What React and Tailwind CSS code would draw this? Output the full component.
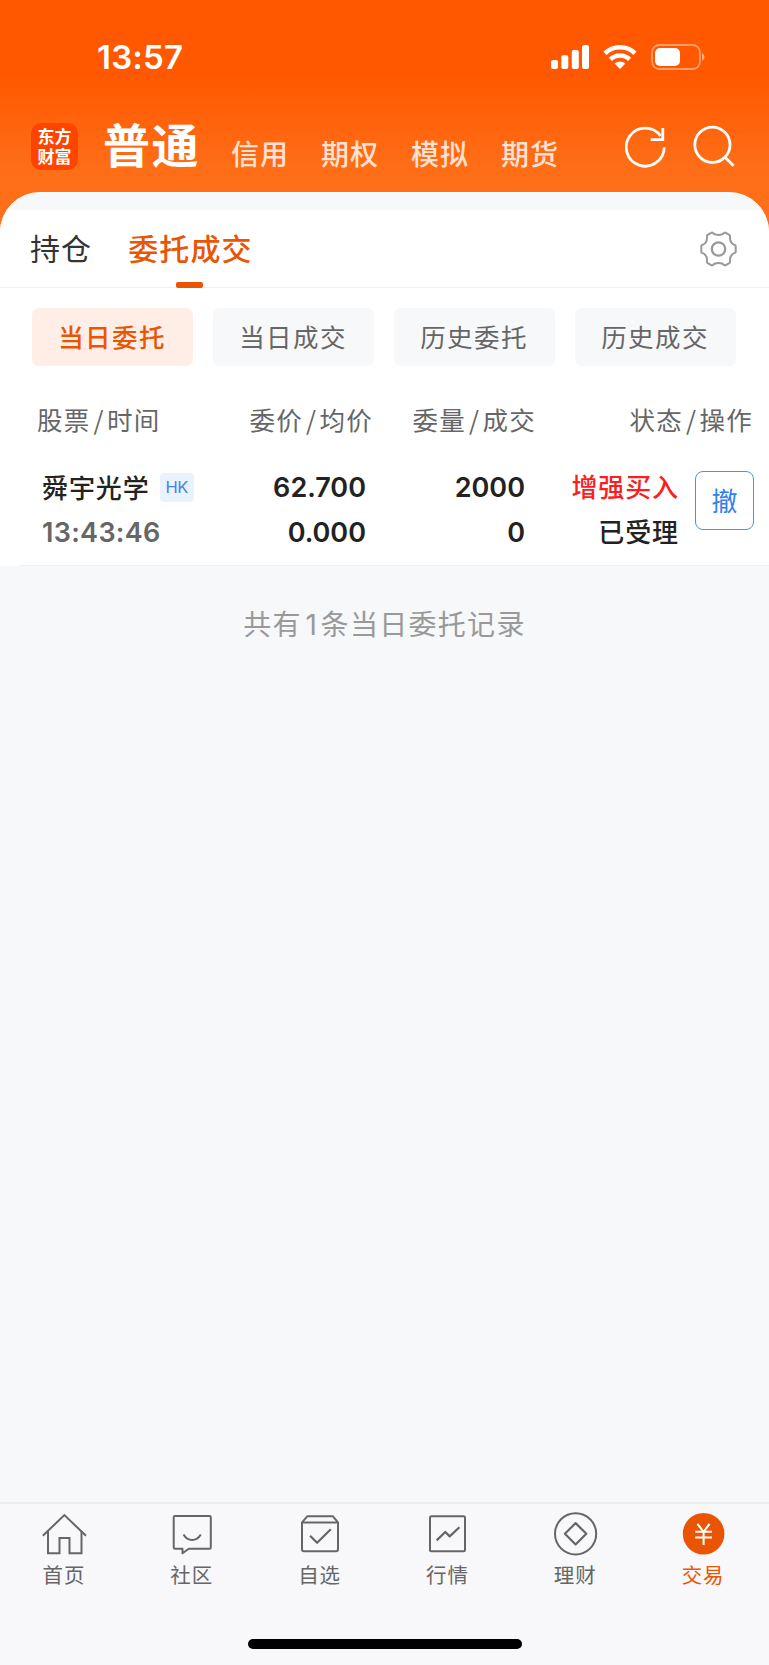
const markets = ["信用", "期权", "模拟", "期货"];
const filters = ["当日委托", "当日成交", "历史委托", "历史成交"];

function StatusBar() {
  return (
    <div className="flex h-[114px] items-center justify-between pl-[97px] pr-[64px]">
      <span className="font-['Inter',sans-serif] text-[33px] leading-none font-semibold tracking-[0.2px]">13:57</span>
      <div className="flex items-center">
        <svg className="h-6 w-[38px]" viewBox="0 0 38 24" fill="currentColor">
          <rect x="0" y="15" width="7" height="9" rx="2" />
          <rect x="10.3" y="10.3" width="7" height="13.7" rx="2" />
          <rect x="20.8" y="5" width="7" height="19" rx="2" />
          <rect x="31" y="0" width="7" height="24" rx="2" />
        </svg>
        <svg className="ml-[14px] h-6 w-[34px]" viewBox="0 0 34 24" fill="none" stroke="currentColor" strokeWidth="4.6">
          <path d="M2 8.3a21.6 21.6 0 0 1 30 0" />
          <path d="M7.4 14.4a13.8 13.8 0 0 1 19.2 0" />
          <path d="M11.6 18.6a8 8 0 0 1 10.8 0L17 24z" fill="currentColor" stroke="none" />
        </svg>
        <svg className="ml-[14px] h-[26px] w-[54px]" viewBox="0 0 54 26" fill="none">
          <rect x="1" y="1" width="48" height="24" rx="7.5" stroke="#fff" strokeOpacity="0.42" strokeWidth="1.8" />
          <rect x="4" y="4" width="25" height="18" rx="5" fill="#fff" />
          <path d="M51 9.3c3.2 1.2 3.2 6.2 0 7.4z" fill="#fff" fillOpacity="0.5" />
        </svg>
      </div>
    </div>
  );
}

function Header() {
  return (
    <div className="flex h-[78px] items-start pl-[31px] pr-[34px]">
      <div className="mt-[9px] flex h-[47px] w-[47px] flex-col items-center justify-center rounded-[10px] bg-[#ff4400] pb-[2px] text-[17px] leading-[19.6px] font-bold">
        <span>东方</span>
        <span>财富</span>
      </div>
      <h1 className="mt-[-1px] ml-[25px] text-[47px] leading-[60px] font-bold tracking-[1.5px]">普通</h1>
      <div className="mt-[17px] ml-[31px] flex gap-[32px] text-[28px] leading-[44px] font-medium tracking-[1px] text-[#ffe2d2]">
        {markets.map((item) => (
          <span key={item}>{item}</span>
        ))}
      </div>
      <div className="mt-[10px] ml-auto flex gap-[26px]">
        <svg className="h-[46px] w-[42px]" viewBox="0 0 42 46" fill="none" stroke="currentColor" strokeWidth="2.8">
          <path d="M39.2 23.5A19 19 0 1 1 35.6 12" />
          <path d="M37.8 4v11.7H25.7" />
        </svg>
        <svg className="h-[46px] w-[42px]" viewBox="0 0 42 46" fill="none" stroke="currentColor" strokeWidth="2.8">
          <circle cx="19.4" cy="20.7" r="17.6" />
          <path d="M31.8 33.1l8.8 8.6" />
        </svg>
      </div>
    </div>
  );
}

function GearIcon() {
  return (
    <svg className="h-[36px] w-[37px]" viewBox="0 0 37 36" fill="none" stroke="#999" strokeWidth="2" strokeLinejoin="round">
      <path d="M12.8 1.8C15 4.6 22 4.6 24.2 1.8Q25 1.4 25.8 1.9L29.3 3.9Q30.3 4.5 30.1 5.6C29.6 10.5 31.5 13 35 14.1Q35.7 14.5 35.7 15.3V20.7Q35.7 21.5 35 21.9C31.5 23 29.6 25.5 30.1 30.4Q30.3 31.5 29.3 32.1L25.8 34.1Q25 34.6 24.2 34.2C22 31.4 15 31.4 12.8 34.2Q12 34.6 11.2 34.1L7.7 32.1Q6.7 31.5 6.9 30.4C7.4 25.5 5.5 23 2 21.9Q1.3 21.5 1.3 20.7V15.3Q1.3 14.5 2 14.1C5.5 13 7.4 10.5 6.9 5.6Q6.7 4.5 7.7 3.9L11.2 1.9Q12 1.4 12.8 1.8Z" />
      <circle cx="18.5" cy="18" r="6.7" strokeWidth="2.3" />
    </svg>
  );
}

function Tabs() {
  return (
    <div className="flex h-[78px] shrink-0 items-start border-b border-[#eeeff1] bg-white pl-[30px] pr-[32px] text-[30px] leading-[44px] tracking-[1.1px]">
      <span className="mt-[15px] text-[#333]">持仓</span>
      <div className="ml-[36px] flex h-[78px] flex-col items-center justify-between pt-[15px] font-medium text-[#ea5504]">
        <span>委托成交</span>
        <span className="mr-[1px] h-[6px] w-[27px] rounded-[2px] bg-[#ea5504]" />
      </div>
      <div className="mt-[21px] ml-auto">
        <GearIcon />
      </div>
    </div>
  );
}

function Pair({ a, b }) {
  return (
    <span className="whitespace-nowrap">
      {a}
      <span className="mr-[2px] ml-[3px]">/</span>
      {b}
    </span>
  );
}

function Orders() {
  return (
    <div className="bg-white">
      <div className="grid grid-cols-4 gap-[20px] pt-[20px] pr-[33px] pl-[32px]">
        {filters.map((item, i) => (
          <button
            key={item}
            className={
              i === 0
                ? "h-[58px] rounded-[7px] bg-[#feeee6] pr-[1px] pb-[2px] text-[25.5px] font-medium tracking-[1.4px] text-[#ea5504]"
                : "h-[58px] rounded-[7px] bg-[#f7f8fa] pr-[1px] pb-[2px] text-[25.5px] tracking-[1.4px] text-[#666]"
            }
          >
            {item}
          </button>
        ))}
      </div>

      <div className="mt-[33px] flex h-[40px] pl-[37px] pr-[16px] text-[25.5px] leading-[40px] tracking-[1.3px] text-[#666]">
        <div className="w-[136px]"><Pair a="股票" b="时间" /></div>
        <div className="w-[200px] text-right"><Pair a="委价" b="均价" /></div>
        <div className="w-[163px] text-right"><Pair a="委量" b="成交" /></div>
        <div className="flex-1 text-right"><Pair a="状态" b="操作" /></div>
      </div>

      <div className="flex h-[126px] pt-[26px] pl-[42px] pr-[15px] text-[26px] leading-[45px] font-medium tracking-[0.9px] text-[#222]">
        <div className="w-[170px]">
          <div className="flex h-[45px] items-center">
            <span className="-mt-[3px]">舜宇光学</span>
            <span className="ml-[10px] flex h-[29px] w-[34px] items-center justify-center rounded-[4px] bg-[#eaf2fd] font-['Inter',sans-serif] text-[16.5px] leading-none font-normal tracking-[-0.5px] text-[#3c87e8]">HK</span>
          </div>
          <div className="font-['Inter',sans-serif] text-[27px] font-semibold tracking-[0.3px] text-[#666]">13:43:46</div>
        </div>
        <div className="w-[154px] text-right font-['Inter',sans-serif] text-[27px] font-semibold tracking-[0px]">
          <div>62.700</div>
          <div>0.000</div>
        </div>
        <div className="w-[159px] text-right font-['Inter',sans-serif] text-[27px] font-semibold tracking-[0px]">
          <div>2000</div>
          <div>0</div>
        </div>
        <div className="-mt-[2px] w-[154px] text-right">
          <div className="text-[#fb1d20]">增强买入</div>
          <div>已受理</div>
        </div>
        <button className="mt-[6px] ml-auto h-[59px] w-[59px] rounded-[8px] border-[1.5px] border-[#4a90ee] pb-[2px] text-[26px] leading-none font-normal tracking-normal text-[#2f80ed]">
          撤
        </button>
      </div>
      <div className="ml-[19px] h-px bg-[#eeeff0]" />
    </div>
  );
}

const iconClass = "h-[46px] w-[46px]";

const navItems = [
  {
    label: "首页",
    icon: (
      <svg className={iconClass} viewBox="0 0 46 46" fill="none" stroke="currentColor" strokeWidth="2">
        <path d="M1.8 25.8L23.4 5.1 45 25.8" />
        <path d="M7 21v22.3h11.5V28h10v15.3h12V21" />
      </svg>
    ),
  },
  {
    label: "社区",
    icon: (
      <svg className={iconClass} viewBox="0 0 46 46" fill="none" stroke="currentColor" strokeWidth="2" strokeLinejoin="round">
        <path d="M6 6h34.5a1.3 1.3 0 0 1 1.3 1.3v30.1a1.3 1.3 0 0 1-1.3 1.3H19.8L13.5 43.3v-4.6H6a1.3 1.3 0 0 1-1.3-1.3V7.3A1.3 1.3 0 0 1 6 6z" />
        <path d="M14.5 24.5c4.3 7.3 13 7.3 17.3 0" />
      </svg>
    ),
  },
  {
    label: "自选",
    icon: (
      <svg className={iconClass} viewBox="0 0 46 46" fill="none" stroke="currentColor" strokeWidth="2" strokeLinejoin="round">
        <path d="M5 12.3L10.5 6.2h25.2l5.3 6.1v27a2 2 0 0 1-2 2H7a2 2 0 0 1-2-2z" />
        <path d="M5 12.6h36" />
        <path d="M13.1 25.8l7 7L33.8 19.3" strokeWidth="2.2" />
      </svg>
    ),
  },
  {
    label: "行情",
    icon: (
      <svg className={iconClass} viewBox="0 0 46 46" fill="none" stroke="currentColor" strokeWidth="2" strokeLinejoin="round">
        <rect x="6" y="6.3" width="35" height="35" rx="1.5" />
        <path d="M12.6 30.4l8.7-8.4 4.4 4.4 9.7-9.2" strokeWidth="2.2" />
      </svg>
    ),
  },
  {
    label: "理财",
    icon: (
      <svg className={iconClass} viewBox="0 0 46 46" fill="none" stroke="currentColor" strokeWidth="2" strokeLinejoin="round">
        <circle cx="23.6" cy="23.8" r="20.6" />
        <path d="M23.6 13.1L34.3 23.8 23.6 34.5 12.9 23.8z" strokeWidth="2.2" />
      </svg>
    ),
  },
  {
    label: "交易",
    active: true,
    icon: (
      <svg className={iconClass} viewBox="0 0 46 46" fill="none">
        <circle cx="23.6" cy="23.8" r="20.8" fill="#ea5504" />
        <path d="M17.4 13.8l6.2 8 6-8M15.3 21.8h16.6M15.3 27.6h16.6M23.6 21.8V35" stroke="#fff" strokeWidth="2" />
      </svg>
    ),
  },
];

function BottomNav() {
  return (
    <div className="flex h-[163px] shrink-0 flex-col items-center border-t-2 border-[#ebecee] bg-[#f8f8fa]">
      <div className="grid w-full grid-cols-6 pt-[6px] pr-[2px]">
        {navItems.map((item) => (
          <div key={item.label} className={item.active ? "flex flex-col items-center text-[#ea5504]" : "flex flex-col items-center text-[#666]"}>
            {item.icon}
            <span className="mt-[3px] text-[20.5px] leading-[30px] tracking-[0.9px]">{item.label}</span>
          </div>
        ))}
      </div>
      <div className="mt-[50px] h-[10px] w-[274px] rounded-full bg-black" />
    </div>
  );
}

function App() {
  return (
    <div className="flex h-[1665px] w-[769px] flex-col overflow-hidden bg-[#f7f8fa] font-['Noto_Sans_CJK_SC',sans-serif]">
      <div className="h-[240px] shrink-0 bg-[linear-gradient(to_bottom,#ff5800_0px,#ff5800_75px,#ff6d17_165px,#ff7019_240px)] text-white">
        <StatusBar />
        <Header />
      </div>
      <div className="-mt-[48px] flex flex-1 flex-col overflow-hidden rounded-t-[40px] border-t border-white bg-[#f7f8fa]">
        <div className="h-[17px] shrink-0" />
        <Tabs />
        <Orders />
        <p className="mt-[35px] text-center text-[28px] leading-[44px] tracking-[1.3px] text-[#999]">
          共有<span className="mr-[2.5px] ml-[3.5px] font-['Inter',sans-serif]">1</span>条当日委托记录
        </p>
      </div>
      <BottomNav />
    </div>
  );
}

export default App;
